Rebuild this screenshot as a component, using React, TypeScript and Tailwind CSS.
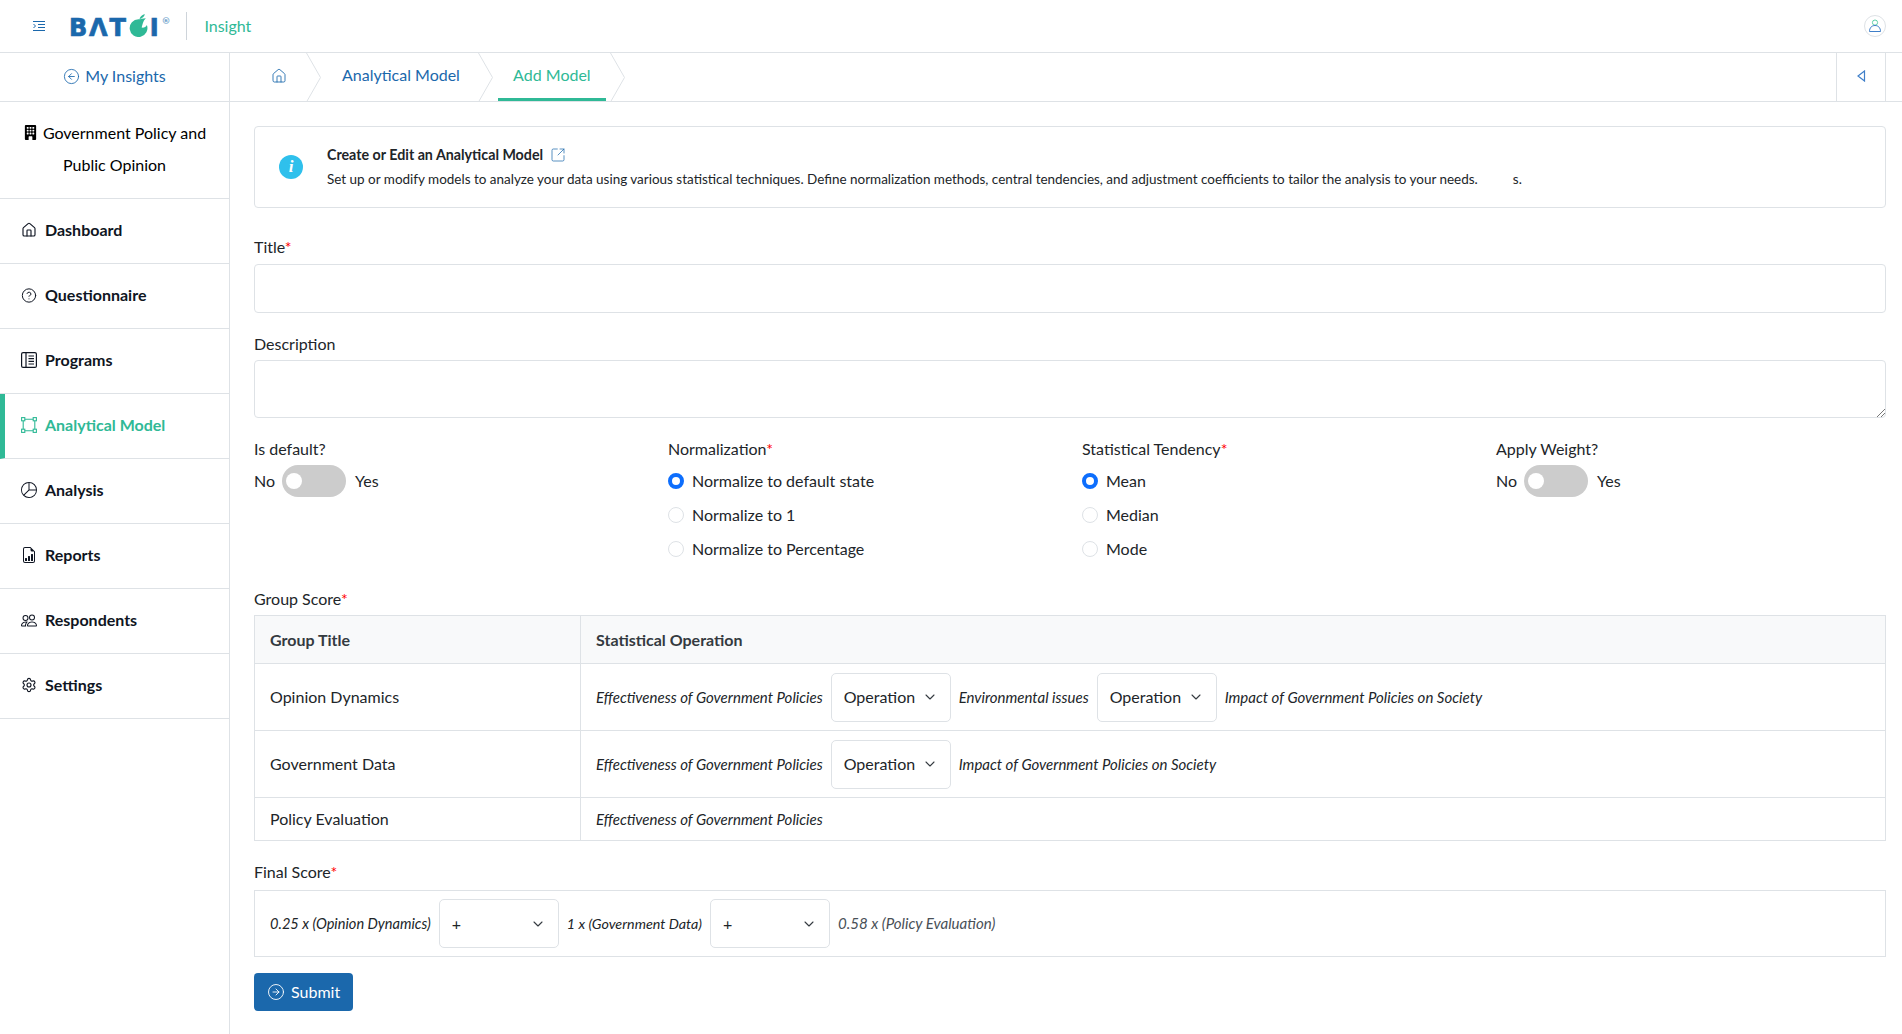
import React from "react";
import { ChevronDown, CircleArrowLeft, CircleArrowRight, CircleHelp, House, Settings, SquareArrowOutUpRight } from "lucide-react";
import { BsBuildingFill, BsPieChart, BsFileEarmarkBarGraph, BsPeople } from "react-icons/bs";

const ProgramsIcon = () => (
  <svg width="16" height="16" viewBox="0 0 16 16" fill="none" stroke="currentColor" strokeWidth="1.2">
    <rect x="0.6" y="0.6" width="14.8" height="14.8" rx="1.5" />
    <path d="M5 1v14M7.500 4h5.500M7.500 6.700h5.500M7.500 9.400h5.500M7.500 12h5.500" />
  </svg>
);

const ModelIcon = () => (
  <svg width="16" height="16" viewBox="0 0 16 16" fill="none" stroke="currentColor" strokeWidth="1.1">
    <rect x="0.6" y="0.6" width="3.2" height="3.2" />
    <rect x="12.2" y="0.6" width="3.2" height="3.2" />
    <rect x="0.6" y="12.2" width="3.2" height="3.2" />
    <rect x="12.2" y="12.2" width="3.2" height="3.2" />
    <path d="M3.800 2.200h8.400M3.800 13.800h8.400M2.200 3.800v8.400M13.800 3.800v8.400" />
  </svg>
);

const Crumb = () => (
  <svg width="15" height="49" viewBox="0 0 15 49" fill="none" stroke="#dee2e6" strokeWidth="1" className="shrink-0">
    <path d="M0.5 0l14 24.500-14 24.500" />
  </svg>
);

const NAV: { label: string; icon: React.ReactNode; active?: boolean }[] = [
  { label: "Dashboard", icon: <House size={16} strokeWidth={1.7} /> },
  { label: "Questionnaire", icon: <CircleHelp size={17} strokeWidth={1.5} /> },
  { label: "Programs", icon: <ProgramsIcon /> },
  { label: "Analytical Model", icon: <ModelIcon />, active: true },
  { label: "Analysis", icon: <BsPieChart size={16} /> },
  { label: "Reports", icon: <BsFileEarmarkBarGraph size={16} /> },
  { label: "Respondents", icon: <BsPeople size={17} /> },
  { label: "Settings", icon: <Settings size={16} strokeWidth={1.7} /> },
];

const Req = () => <span className="text-[#ff0000]">*</span>;

const Select = ({ label }: { label: string }) => (
  <div className="w-[120px] h-[49px] shrink-0 flex items-center justify-between pl-[12px] pr-[12px] bg-white border border-[#dee2e6] rounded-[5px] text-[#212529]">
    <span>{label}</span>
    <ChevronDown size={16} strokeWidth={1.6} className="text-[#343a40]" />
  </div>
);

const Toggle = () => (
  <div className="flex items-center h-8">
    <span>No</span>
    <div className="ml-[7px] w-16 h-8 rounded-full bg-[#cccccc] flex items-center pl-[4px]">
      <div className="w-4 h-4 rounded-full bg-white" />
    </div>
    <span className="ml-[9px]">Yes</span>
  </div>
);

const Radio = ({ label, checked }: { label: string; checked?: boolean }) => (
  <div className="flex items-center h-[34px]">
    <div className={checked ? "w-4 h-4 rounded-full bg-white border-[4px] border-[#0d6efd]" : "w-4 h-4 rounded-full bg-white border border-[#dee2e6]"} />
    <span className="ml-2">{label}</span>
  </div>
);

const Op = ({ children, cls = "text-[15px]" }: { children: React.ReactNode; cls?: string }) => (
  <span className={`italic whitespace-nowrap ${cls}`}>{children}</span>
);

export default function App() {
  return (
    <div className="h-screen overflow-hidden flex flex-col bg-white text-[16px] text-[#212529] font-['Lato',sans-serif]">
      {/* top bar */}
      <header className="h-[53px] shrink-0 border-b border-[#dee2e6] flex items-center pl-[33px] pr-[16px] pb-[1px]">
        <svg width="12" height="10" viewBox="0 0 12 10" fill="none" stroke="#1b68ac" strokeWidth="1" className="shrink-0">
          <path d="M0 .5h12M5 3.500h7M5 6.500h7M0 9.500h12M.5 3l2 2-2 2" />
        </svg>
        <div className="ml-[24px] flex items-center h-[22px] text-[#1b68ac] font-['DejaVu_Sans',sans-serif] font-bold text-[24px] leading-none tracking-[1.8px] [-webkit-text-stroke:0.7px_#1b68ac]">
          <span className="mt-[4px]">BΛT</span>
          <svg width="21" height="23" viewBox="0 0 20 22" className="shrink-0">
            <path d="M10 5a8.500 8.500 0 1 0 8 5.500c-1 2-3 3-5 2.500 1-3 1-6 4-9-3 0-5 1-7 1z" fill="#2fb996" />
            <path d="M11 5c0-2 2-4 5-5 0 2-2 4-5 5z" fill="#2fb996" />
          </svg>
          <span className="mt-[4px] ml-[1px]">I</span>
          <span className="ml-[1px] mb-[8px] text-[9px] tracking-normal text-[#6f9fcb] [-webkit-text-stroke:0px]">®</span>
        </div>
        <div className="ml-[16px] w-px h-7 bg-[#ced4da]" />
        <span className="ml-[17px] text-[#2fb996]">Insight</span>
        <div className="ml-auto w-[22px] h-[22px] rounded-full border border-[#dee2e6] flex items-center justify-center">
          <svg width="14" height="14" viewBox="0 0 14 14" fill="none" strokeWidth="1">
            <circle cx="7" cy="3.600" r="2.600" stroke="#5fd0a8" />
            <path d="M1.500 12.500c0-3.500 2-6 5.500-6s5.500 2.500 5.500 6z" stroke="#3f7fc9" />
          </svg>
        </div>
      </header>

      <div className="flex-1 min-h-0 flex">
        {/* sidebar */}
        <aside className="w-[230px] shrink-0 border-r border-[#dee2e6] flex flex-col">
          <div className="h-[49px] shrink-0 border-b border-[#dee2e6] flex items-center justify-center gap-[5px] text-[#1b68ac] pb-[2px]">
            <CircleArrowLeft size={17} strokeWidth={1.2} />
            <span>My Insights</span>
          </div>
          <div className="h-[97px] shrink-0 border-b border-[#dee2e6] text-center text-black leading-[32px] pt-[15px]">
            <BsBuildingFill size={15} className="inline mr-[5px] -mt-[4px]" />
            Government Policy and
            <br />
            Public Opinion
          </div>
          {NAV.map((n) => (
            <div
              key={n.label}
              className={`h-[65px] shrink-0 border-b border-[#dee2e6] flex items-center pb-[2px] font-bold text-[16px] ${
                n.active ? "border-l-[5px] border-l-[#2fb996] pl-[16px] text-[#2fb996]" : "pl-[21px] text-[#0f1522]"
              }`}
            >
              <span className="w-4 flex justify-center shrink-0">{n.icon}</span>
              <span className="ml-[8px]">{n.label}</span>
            </div>
          ))}
        </aside>

        <div className="flex-1 min-w-0 flex flex-col">
          {/* breadcrumb */}
          <div className="h-[49px] shrink-0 border-b border-[#dee2e6] flex items-center pl-[41px] pr-[16px]">
            <House size={16} strokeWidth={1.3} className="text-[#1b68ac] shrink-0 mb-[3px]" />
            <div className="ml-[19px]"><Crumb /></div>
            <span className="ml-[21px] text-[#1b68ac] mb-[5px]">Analytical Model</span>
            <div className="ml-[18px]"><Crumb /></div>
            <div className="ml-[5px] w-[108px] h-full flex items-center justify-center text-[#2fb996] border-b-[3px] border-[#2fb996] pb-[2px]">
              Add Model
            </div>
            <div className="ml-[4px]"><Crumb /></div>
            <div className="ml-auto w-[50px] h-full border-x border-[#dee2e6] flex items-center justify-center pb-[2px]">
              <svg width="9" height="12" viewBox="0 0 9 12" fill="none" stroke="#3f7fc9" strokeWidth="1.2">
                <path d="M7.500 1v10L1 6z" />
              </svg>
            </div>
          </div>

          {/* content */}
          <main className="flex-1 min-h-0 pl-[24px] pr-[16px] pt-[24px]">
            <div className="h-[82px] border border-[#dee2e6] rounded-[4px] flex items-center pl-[24px]">
              <div className="w-6 h-6 rounded-full bg-[#2fc0ec] flex items-center justify-center text-white italic font-bold font-['Liberation_Serif',serif] text-[17px] shrink-0">
                i
              </div>
              <div className="ml-[24px] leading-[24px] text-[#212529]">
                <div className="flex items-center font-bold text-[14.25px]">
                  Create or Edit an Analytical Model
                  <SquareArrowOutUpRight size={16} strokeWidth={1.1} className="ml-[7px] text-[#1b68ac]" />
                </div>
                <div className="whitespace-nowrap text-[13.47px]">
                  Set up or modify models to analyze your data using various statistical techniques. Define normalization methods, central tendencies, and adjustment coefficients to tailor the analysis to your needs.
                  <span className="ml-[35px]">s.</span>
                </div>
              </div>
            </div>

            <div className="mt-[27px] h-6 leading-6">Title<Req /></div>
            <div className="mt-[5px] h-[49px] border border-[#dee2e6] rounded-[4px]" />

            <div className="mt-[19px] h-6 leading-6">Description</div>
            <div className="mt-[4px] h-[58px] border border-[#dee2e6] rounded-[4px] flex items-end justify-end">
              <svg width="9" height="9" viewBox="0 0 9 9" stroke="#777" strokeWidth="1"><path d="M1 9l8-8M5 9l4-4" /></svg>
            </div>

            <div className="mt-[19px] grid grid-cols-4 gap-6 leading-6">
              <div>
                <div className="h-6">Is default?</div>
                <div className="mt-[4px]"><Toggle /></div>
              </div>
              <div>
                <div className="h-6">Normalization<Req /></div>
                <div className="mt-[3px]">
                  <Radio label="Normalize to default state" checked />
                  <Radio label="Normalize to 1" />
                  <Radio label="Normalize to Percentage" />
                </div>
              </div>
              <div>
                <div className="h-6">Statistical Tendency<Req /></div>
                <div className="mt-[3px]">
                  <Radio label="Mean" checked />
                  <Radio label="Median" />
                  <Radio label="Mode" />
                </div>
              </div>
              <div>
                <div className="h-6">Apply Weight?</div>
                <div className="mt-[4px]"><Toggle /></div>
              </div>
            </div>

            <div className="mt-[21px] h-6 leading-6">Group Score<Req /></div>
            <table className="mt-[4px] w-full border-collapse border border-[#dee2e6] table-fixed">
              <thead>
                <tr className="h-[48px] bg-[#f8f9fa] text-[#343a40] font-bold text-left">
                  <th className="w-[326px] border border-[#dee2e6] pl-[15px] font-bold">Group Title</th>
                  <th className="border border-[#dee2e6] pl-[15px] font-bold">Statistical Operation</th>
                </tr>
              </thead>
              <tbody>
                <tr className="h-[67px]">
                  <td className="border border-[#dee2e6] pl-[15px]">Opinion Dynamics</td>
                  <td className="border border-[#dee2e6] pl-[15px]">
                    <div className="flex items-center gap-2">
                      <Op>Effectiveness of Government Policies</Op>
                      <Select label="Operation" />
                      <Op>Environmental issues</Op>
                      <Select label="Operation" />
                      <Op>Impact of Government Policies on Society</Op>
                    </div>
                  </td>
                </tr>
                <tr className="h-[67px]">
                  <td className="border border-[#dee2e6] pl-[15px]">Government Data</td>
                  <td className="border border-[#dee2e6] pl-[15px]">
                    <div className="flex items-center gap-2">
                      <Op>Effectiveness of Government Policies</Op>
                      <Select label="Operation" />
                      <Op>Impact of Government Policies on Society</Op>
                    </div>
                  </td>
                </tr>
                <tr className="h-[43px]">
                  <td className="border border-[#dee2e6] pl-[15px]">Policy Evaluation</td>
                  <td className="border border-[#dee2e6] pl-[15px]">
                    <Op>Effectiveness of Government Policies</Op>
                  </td>
                </tr>
              </tbody>
            </table>

            <div className="mt-[19px] h-6 leading-6">Final Score<Req /></div>
            <div className="mt-[6px] h-[67px] border border-[#dee2e6] flex items-center gap-2 pl-[15px]">
              <Op cls="text-[14.6px]">0.25 x (Opinion Dynamics)</Op>
              <Select label="+" />
              <Op cls="text-[14.3px]">1 x (Government Data)</Op>
              <Select label="+" />
              <Op cls="text-[15.1px] text-[#495057]">0.58 x (Policy Evaluation)</Op>
            </div>

            <button className="mt-[16px] h-[38px] w-[99px] rounded-[4px] bg-[#1b68ac] text-white flex items-center pl-[13px] gap-[6px]">
              <CircleArrowRight size={18} strokeWidth={1.2} />
              <span>Submit</span>
            </button>
          </main>
        </div>
      </div>
    </div>
  );
}
